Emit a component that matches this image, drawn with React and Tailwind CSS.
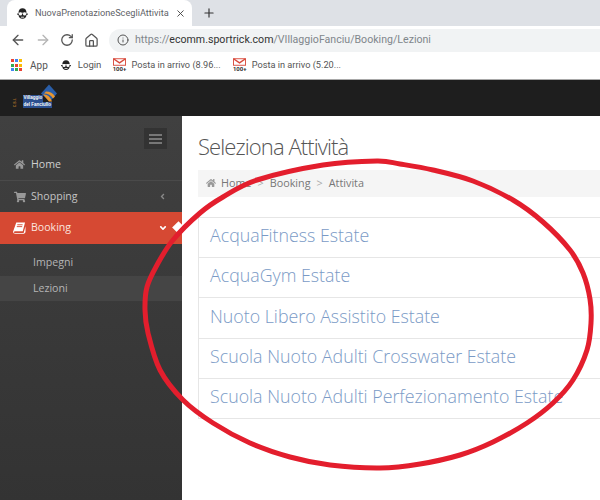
import { ArrowLeft, ArrowRight, RotateCw, House, Info, X, Plus } from 'lucide-react';
import { FaHome, FaShoppingCart, FaAngleLeft, FaAngleDown } from 'react-icons/fa';

const attivita = [
  'AcquaFitness Estate',
  'AcquaGym Estate',
  'Nuoto Libero Assistito Estate',
  'Scuola Nuoto Adulti Crosswater Estate',
  'Scuola Nuoto Adulti Perfezionamento Estate',
];

// punti del cerchio rosso disegnato a mano sullo screenshot
const punti = [
  [377, 161], [400, 164], [433, 170], [473, 181], [513, 200], [543, 222], [570, 250], [583, 273],
  [590, 299], [591, 323], [587, 350], [573, 380], [553, 403], [527, 423], [493, 442], [460, 455],
  [420, 464], [380, 468], [330, 465], [290, 457], [250, 443], [213, 423], [183, 400], [160, 370],
  [148, 333], [145, 310], [147, 287], [157, 265], [173, 240], [200, 213], [223, 197], [257, 180], [323, 165],
];

function cerchioPath(p) {
  const n = p.length;
  let d = `M${p[0][0]} ${p[0][1]}`;
  for (let i = 0; i < n; i++) {
    const p0 = p[(i - 1 + n) % n];
    const p1 = p[i];
    const p2 = p[(i + 1) % n];
    const p3 = p[(i + 2) % n];
    const c1x = p1[0] + (p2[0] - p0[0]) / 6;
    const c1y = p1[1] + (p2[1] - p0[1]) / 6;
    const c2x = p2[0] - (p3[0] - p1[0]) / 6;
    const c2y = p2[1] - (p3[1] - p1[1]) / 6;
    d += ` C${c1x} ${c1y} ${c2x} ${c2y} ${p2[0]} ${p2[1]}`;
  }
  return d + 'Z';
}

function Favicon({ className }) {
  return (
    <svg viewBox="0 0 16 16" className={className}>
      <path d="M3 7 Q3.5 1.5 8 1.5 Q12.5 1.5 13 7 Z" fill="#222" />
      <path d="M1.5 8 H14.5 V9.5 H13 Q12.5 14.5 8 14.5 Q3.5 14.5 3 9.5 H1.5 Z" fill="#222" />
      <circle cx="5.5" cy="8.6" r="2" fill="#fff" />
      <circle cx="10.5" cy="8.6" r="2" fill="#fff" />
      <rect x="6" y="12" width="4" height="1" fill="#fff" />
    </svg>
  );
}

function Gmail() {
  return (
    <div className="flex flex-col items-center w-[14px] leading-none">
      <svg viewBox="0 0 14 8" className="w-[13px] h-[8px]">
        <rect x="0.5" y="0.5" width="13" height="7" fill="#fff" stroke="#d8493b" />
        <path d="M0.5 0.5 L7 5 L13.5 0.5" fill="none" stroke="#d8493b" strokeWidth="1.6" />
      </svg>
      <span className="text-[6px] font-bold text-[#333] leading-[6px]">100+</span>
    </div>
  );
}

function AppGrid() {
  const colori = ['#ea4335', '#4285f4', '#fbbc05', '#34a853', '#ea4335', '#fbbc05', '#4285f4', '#34a853', '#ea4335'];
  return (
    <div className="grid grid-cols-3 gap-[1.5px] w-[11px]">
      {colori.map((c, i) => (
        <span key={i} className="w-[3px] h-[3px]" style={{ backgroundColor: c }} />
      ))}
    </div>
  );
}

function BookIcon() {
  return (
    <svg viewBox="0 0 14 13" className="w-[13px] h-[12px]">
      <path d="M3.5 0.5 H13 L10.5 10 H2.5 Q0.8 10 1 11 Q1.2 12 2.5 12 H11.5 L13.5 4.5 V11 L12 12.8 H2.5 Q0 12.8 0 10.5 Z" fill="#fff" />
      <path d="M4.6 3 H10.4 M4.1 5 H9.9" stroke="#d64933" strokeWidth="1" />
    </svg>
  );
}

function Logo() {
  return (
    <div className="relative w-[46px] h-[28px]">
      <span className="absolute left-[0px] top-[17px] text-[3.5px] leading-none text-[#b5752b] font-bold rotate-[-90deg] font-['Liberation_Sans',sans-serif]">C.S.I.</span>
      <svg viewBox="0 0 18 18" className="absolute left-[29px] top-0 w-[18px] h-[19px]">
        <path d="M9 0 L17 9 L10 17 L1 9 Z" fill="#2a5ea8" />
        <path d="M3 10 Q9 9 12 17 L9 17 Z M6 7 Q12 7 15 12 L13 14 Q10 9 4 9 Z" fill="#e8962f" />
      </svg>
      <div className="absolute left-[12px] top-[11px] text-[4.5px] leading-[6.5px] font-bold text-white font-['Liberation_Sans',sans-serif]">
        <div className="bg-[#2b4f8f] w-fit px-[0.5px]">Villaggio</div>
        <div className="bg-[#2b4f8f] w-fit px-[0.5px]">del Fanciullo</div>
      </div>
    </div>
  );
}

export default function App() {
  return (
    <div className="relative w-[600px] h-[500px] overflow-hidden bg-white font-['Open_Sans',sans-serif]">
      {/* Tab bar */}
      <div className="h-[26px] bg-[#dee1e6] flex items-end pl-[7px] gap-[10px]">
        <div className="w-[185px] h-[26px] bg-white rounded-t-lg flex items-center pl-[9px] pr-[8px] gap-[6px]">
          <Favicon className="w-[13px] h-[13px] shrink-0" />
          <span className="flex-1 whitespace-nowrap text-[9.2px] text-[#5f6368] font-['Roboto',sans-serif]">NuovaPrenotazioneScegliAttivita</span>
          <X className="w-[11px] h-[11px] text-[#444] shrink-0" strokeWidth={2} />
        </div>
        <Plus className="w-[14px] h-[14px] mb-[6px] text-[#333]" strokeWidth={2} />
      </div>

      {/* Toolbar */}
      <div className="h-[25px] bg-white flex items-center pl-[10px] pt-[3px]">
        <ArrowLeft className="w-[16px] h-[16px] text-[#555]" strokeWidth={2} />
        <ArrowRight className="w-[16px] h-[16px] ml-[9px] text-[#b5b5b5]" strokeWidth={2} />
        <RotateCw className="w-[14px] h-[14px] ml-[9px] text-[#555]" strokeWidth={2.2} />
        <House className="w-[15px] h-[15px] ml-[10px] text-[#555]" strokeWidth={2} />
        <div className="flex-1 h-[23px] ml-[10px] bg-[#f1f3f4] rounded-l-full flex items-center pl-[8px] text-[10.6px] font-['Roboto',sans-serif]">
          <Info className="w-[12px] h-[12px] text-[#555]" strokeWidth={2} />
          <span className="ml-[6px] text-[#80868b]">https://<span className="text-[#333]">ecomm.sportrick.com</span>/VIllaggioFanciu/Booking/Lezioni</span>
        </div>
      </div>

      {/* Bookmarks */}
      <div className="h-[29px] bg-white border-b border-[#a8a8a8] flex items-center pl-[11px] text-[9.2px] text-[#555] font-['Roboto',sans-serif]">
        <AppGrid />
        <span className="ml-[8px] text-[10px]">App</span>
        <Favicon className="w-[12px] h-[12px] ml-[12px]" />
        <span className="ml-[6px] text-[9.6px]">Login</span>
        <div className="ml-[11px]"><Gmail /></div>
        <span className="ml-[5px]">Posta in arrivo (8.96...</span>
        <div className="ml-[12px]"><Gmail /></div>
        <span className="ml-[5px]">Posta in arrivo (5.20...</span>
      </div>

      {/* Navbar */}
      <div className="h-[36px] bg-[#1e1e1e] flex items-center pl-[11px]">
        <Logo />
      </div>

      <div className="flex h-[385px]">
        {/* Sidebar */}
        <aside className="relative w-[182px] shrink-0 bg-gradient-to-b from-[#404040] to-[#333333] text-[10.6px]">
          <div className="flex justify-end pt-[12px] pr-[15px]">
            <div className="w-[23px] h-[21px] bg-[#333333] flex flex-col items-center justify-center gap-[2px]">
              <span className="w-[13px] h-[2px] bg-[#777]" />
              <span className="w-[13px] h-[2px] bg-[#777]" />
              <span className="w-[13px] h-[2px] bg-[#777]" />
            </div>
          </div>
          <div className="h-[32px] border-b border-[#4a4a4a] flex items-center pl-[14px] text-[#cfcfcf]">
            <FaHome className="w-[11px] h-[11px] text-[#999]" />
            <span className="ml-[6px]">Home</span>
          </div>
          <div className="h-[31px] flex items-center pl-[14px] pr-[15px] text-[#c4c4c4]">
            <FaShoppingCart className="w-[12px] h-[12px] text-[#999]" />
            <span className="ml-[5px] flex-1">Shopping</span>
            <FaAngleLeft className="w-[9px] h-[9px] text-[#888]" />
          </div>
          <div className="relative h-[32px] bg-[#d64933] flex items-center pl-[13px] pr-[14px] pb-[1px] text-[#fbe4df]">
            <BookIcon />
            <span className="ml-[5px] flex-1">Booking</span>
            <FaAngleDown className="w-[10px] h-[10px] text-white" />
            <span className="absolute right-[-1px] top-[11px] w-[9px] h-[9px] bg-white rotate-45" />
          </div>
          <div className="h-[32px] flex items-center pl-[33px] pt-[5px] text-[#b5b5b5]">Impegni</div>
          <div className="h-[25px] bg-[#454545] flex items-center pl-[33px] text-[#b5b5b5]">Lezioni</div>
        </aside>

        {/* Contenuto */}
        <main className="flex-1 pl-[16px] min-w-0">
          <h1 className="mt-[16px] text-[22px] leading-[28px] font-light tracking-[-0.9px] text-[#555]">Seleziona Attività</h1>
          <nav className="mt-[10px] h-[27px] bg-[#f5f5f5] flex items-center pl-[8px] pb-[1px] text-[10.8px] text-[#777]">
            <FaHome className="w-[10px] h-[10px] text-[#999]" />
            <span className="ml-[5px]">Home</span>
            <span className="mx-[6px] text-[#aaa]">&gt;</span>
            <span>Booking</span>
            <span className="mx-[6px] text-[#aaa]">&gt;</span>
            <span>Attivita</span>
          </nav>
          <ul className="mt-[20px] border-l border-t border-[#e6e6e6]">
            {attivita.map((a) => (
              <li key={a} className="h-[40.2px] border-b border-[#e6e6e6] flex items-center pl-[11px] pb-[4px] text-[17.8px] font-light text-[#7a9ac6] whitespace-nowrap">
                {a}
              </li>
            ))}
          </ul>
        </main>
      </div>

      {/* cerchio rosso */}
      <svg viewBox="0 0 600 500" className="absolute inset-0 w-[600px] h-[500px] pointer-events-none">
        <path d={cerchioPath(punti)} fill="none" stroke="#e31e2d" strokeWidth="5" />
      </svg>
    </div>
  );
}
